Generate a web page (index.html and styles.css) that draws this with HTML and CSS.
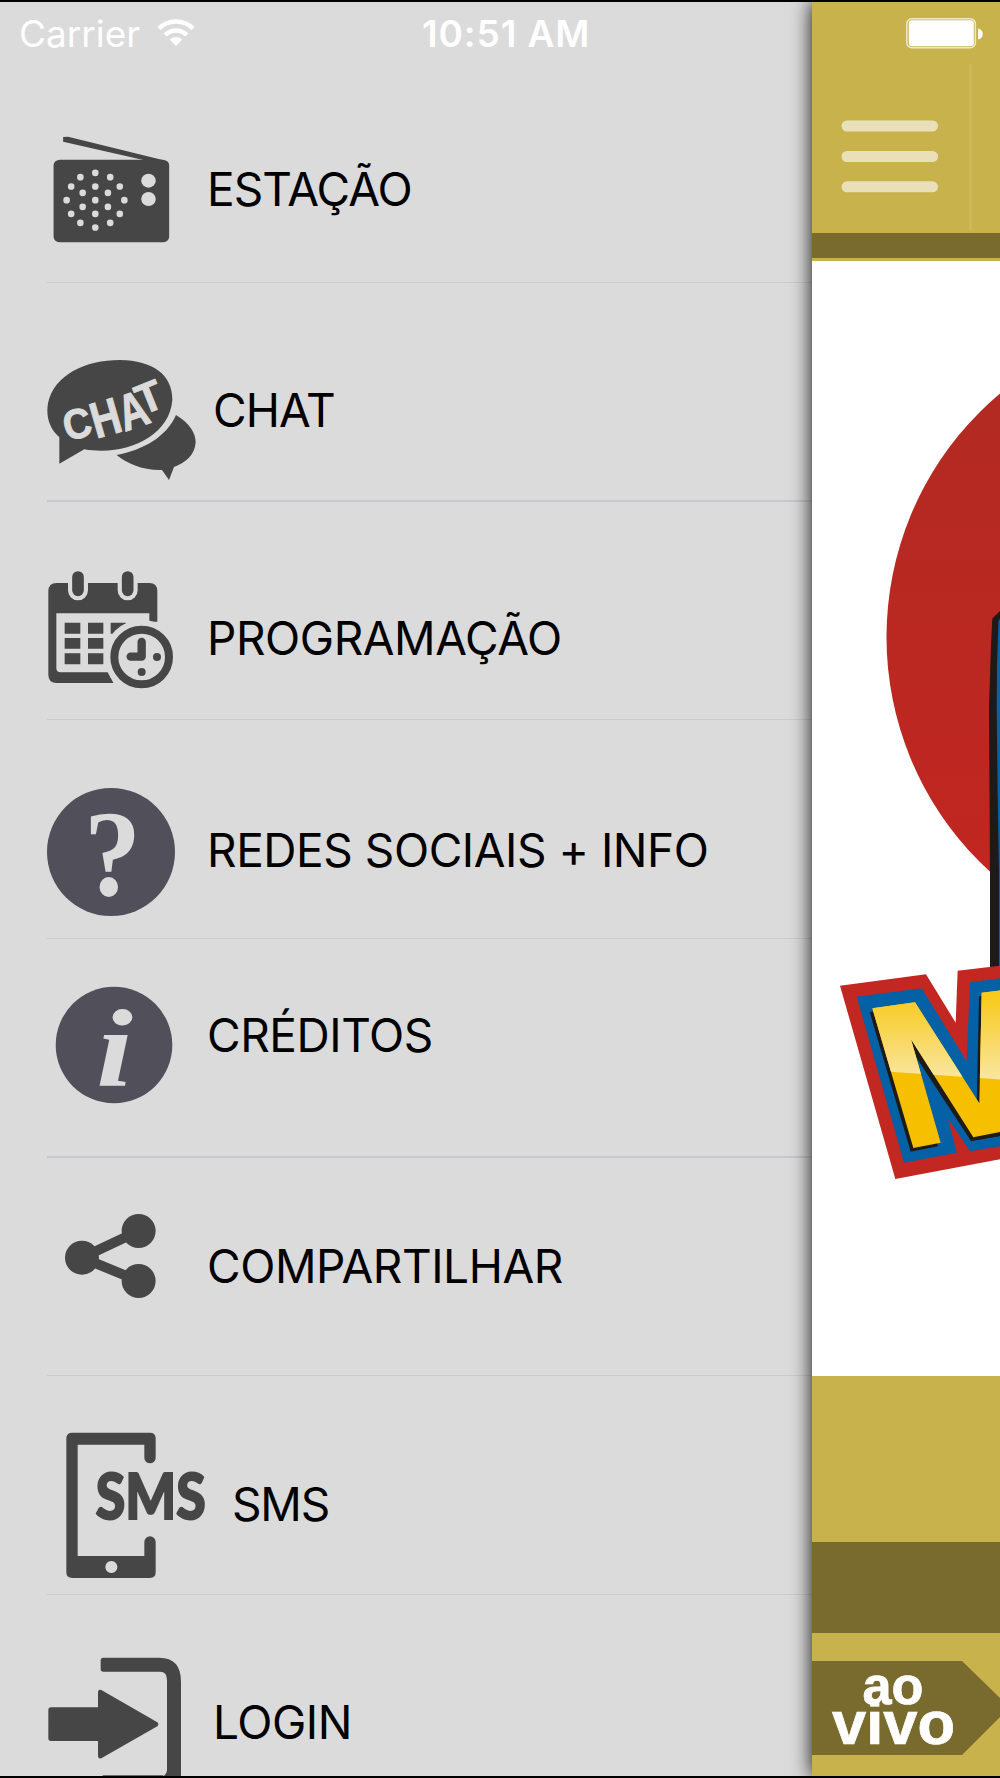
FILE: index.html
```html
<!DOCTYPE html>
<html lang="pt">
<head>
<meta charset="utf-8">
<title>Menu</title>
<link rel="stylesheet" href="styles.css">
</head>
<body>
<div class="screen">
  <aside class="menu">
    <header class="status">
      <span class="carrier">Carrier</span>
      <svg class="wifi" width="38" height="29" viewBox="0 0 38 29" fill="none" stroke="#fff" stroke-width="4.5">
        <path d="M1.8 10.5a24.5 24.5 0 0 1 34.4 0M8.1 17a15.5 15.5 0 0 1 21.8 0"/>
        <path d="M19 28l-6.2-6.5a9 9 0 0 1 12.4 0z" fill="#fff" stroke="none"/>
      </svg>
      <span class="time">10:51 AM</span>
    </header>
    <nav class="list">
      <a class="row estacao">
        <svg class="icon" width="159" height="218" viewBox="47 64 159 218">
          <g transform="scale(.3827 .33333)">
            <path d="M165 411L178 410 425 480 375 480 165 425Z" fill="#464646"/>
            <rect x="140" y="479" width="302" height="248" rx="17" fill="#464646"/>
            <g fill="#dbdbdb">
              <ellipse cx="388" cy="542" rx="19" ry="21"/><ellipse cx="388" cy="597" rx="19" ry="21"/>
            </g>
            <path d="M249 517v3M210 530v3M288 530v3M186 558v3M249 558v3M313 558v3M216 577v3M282 577v3M174 599v3M249 599v3M325 599v3M216 619v3M282 619v3M186 640v3M249 640v3M313 640v3M210 667v3M288 667v3M249 681v3" stroke="#dbdbdb" stroke-width="17" stroke-linecap="round"/>
          </g>
        </svg>
        <span class="label">ESTAÇÃO</span>
      </a>
      <a class="row chat">
        <svg class="icon" width="165" height="217" viewBox="47 283 165 217">
          <g transform="translate(30 340) scale(.33333)" fill="#464646">
            <path d="M438 225C480 250 497 280 497 307C495 345 465 370 432 381L417 420 396 390C340 392 290 370 260 345C340 330 410 290 438 225Z"/>
            <path d="M88 371V292C55 262 48 225 54 190C72 105 165 60 270 60C370 62 428 105 427 180C420 275 320 332 215 332C195 332 180 331 163 328Z"/>
            <text class="chat-word" font-size="126" transform="rotate(-14 142 252)" x="99" y="295" textLength="84" lengthAdjust="spacingAndGlyphs">C</text>
            <text class="chat-word" font-size="152" transform="rotate(-16 225 235)" x="183" y="287" textLength="88" lengthAdjust="spacingAndGlyphs">H</text>
            <text class="chat-word" font-size="152" transform="rotate(-19 305 210)" x="264" y="265" textLength="88" lengthAdjust="spacingAndGlyphs">A</text>
            <text class="chat-word" font-size="126" transform="rotate(-22 358 168)" x="318" y="214" textLength="76" lengthAdjust="spacingAndGlyphs">T</text>
          </g>
        </svg>
        <span class="label">CHAT</span>
      </a>
      <a class="row programacao">
        <svg class="icon" width="159" height="217" viewBox="47 502 159 217">
          <g transform="translate(30 550) scale(.33333)" fill="#464646">
            <path fill-rule="evenodd" d="M80 99H358Q382 99 382 124V215H358V190H79V355Q79 367 92 367H235L250 399H80Q55 399 55 374V124Q55 99 80 99Z"/>
            <path d="M144 81V121M293 81V121" stroke="#dbdbdb" stroke-width="60" stroke-linecap="round"/>
            <path d="M144 81V121M293 81V121" stroke="#464646" stroke-width="35" stroke-linecap="round"/>
            <path d="M104 218h47v33h-47zM174 218h46v33h-46zM242 218h46v33h-46zM104 264h47v32h-47zM174 264h46v32h-46zM104 310h47v33h-47zM174 310h46v33h-46z"/>
            <circle cx="335" cy="321" r="112" fill="#dbdbdb"/>
            <circle cx="335" cy="321" r="82" fill="none" stroke="#464646" stroke-width="24"/>
            <path d="M335 276V320H302" fill="none" stroke="#464646" stroke-width="25" stroke-linecap="round" stroke-linejoin="round"/>
            <circle cx="381" cy="321" r="12"/><circle cx="335" cy="366" r="12"/>
          </g>
        </svg>
        <span class="label">PROGRAMAÇÃO</span>
      </a>
      <a class="row redes">
        <svg class="icon" width="159" height="218" viewBox="47 720 159 218">
          <circle cx="111" cy="852" r="64" fill="#51505a"/>
          <text class="serif-mark" transform="translate(112.5 895) scale(.95 1.02)" text-anchor="middle">?</text>
        </svg>
        <span class="label">REDES SOCIAIS + INFO</span>
      </a>
      <a class="row creditos">
        <svg class="icon" width="159" height="217" viewBox="47 939 159 217">
          <circle cx="114" cy="1045" r="58.3" fill="#51505a"/>
          <text class="serif-mark slanted" transform="translate(114.5 1085.5) scale(1.1 .92)" text-anchor="middle">i</text>
        </svg>
        <span class="label">CRÉDITOS</span>
      </a>
      <a class="row compartilhar">
        <svg class="icon" width="159" height="217" viewBox="47 1158 159 217">
          <g transform="translate(30.3 1190) scale(.33333)" fill="#464646">
            <path d="M325 123L155 203 325 273" fill="none" stroke="#464646" stroke-width="30"/>
            <circle cx="325" cy="123" r="51"/><circle cx="155" cy="203" r="51"/><circle cx="325" cy="273" r="51"/>
          </g>
        </svg>
        <span class="label">COMPARTILHAR</span>
      </a>
      <a class="row sms">
        <svg class="icon" width="184" height="218" viewBox="47 1376 184 218">
          <g transform="translate(30 1400) scale(.33333)" fill="#464646">
            <path fill-rule="evenodd" d="M127 98H360Q377 98 377 115V173A17 17 0 0 1 343 173V134H143V468H343V426A17 17 0 0 1 377 426V517Q377 534 360 534H127Q109 534 109 517V115Q109 98 127 98ZM244 483a18 18 0 1 0 .1 0Z"/>
            <text class="sms-word" x="197" y="358" textLength="330" lengthAdjust="spacingAndGlyphs">SMS</text>
          </g>
        </svg>
        <span class="label">SMS</span>
      </a>
      <a class="row login">
        <svg class="icon" width="165" height="181" viewBox="47 1595 165 181">
          <g transform="translate(30 1630) scale(.33333)" fill="#464646">
            <path d="M220 83H388Q453 83 453 155V445H390Q411 436 411 420V150Q411 125 390 125H220Q212 125 212 117V91Q212 83 220 83Z"/>
            <path d="M218 436H400V445H218Z"/>
            <path d="M63 232H204V188Q204 176 214 180L382 277Q388 283 382 289L214 385Q204 387 204 377V333H63Q55 333 55 325V240Q55 232 63 232Z"/>
          </g>
        </svg>
        <span class="label">LOGIN</span>
      </a>
    </nav>
  </aside>
  <main class="player">
    <header class="topbar">
      <svg width="188" height="231" viewBox="812 2 188 231">
        <rect x="906.8" y="18.8" width="68.6" height="29" rx="5" fill="none" stroke="#f0e8cb" stroke-width="1.5"/>
        <rect x="908.8" y="20.3" width="65" height="26" rx="3" fill="#fff"/>
        <path d="M978 28.5Q982.7 29.5 982.7 34T978 39.5Z" fill="#fff"/>
        <path d="M970.5 64V231" stroke="#cdb85c" stroke-width="3"/>
        <path d="M847 126H932.5M847 156.5H932.5M847 186.8H932.5" stroke="#e9e0b9" stroke-width="11" stroke-linecap="round"/>
      </svg>
    </header>
    <div class="strip"></div>
    <section class="cover">
      <svg width="188" height="1115" viewBox="812 261 188 1115">
        <defs>
          <linearGradient id="disc" x1="0" y1="0" x2="0" y2="1"><stop offset="0" stop-color="#b02b24"/><stop offset="1" stop-color="#c4251f"/></linearGradient>
          <linearGradient id="gloss" gradientUnits="userSpaceOnUse" x1="0" y1="200" x2="0" y2="445"><stop offset="0" stop-color="#f8ca1c"/><stop offset="1" stop-color="#f9e6a0"/></linearGradient>
          <clipPath id="letter"><path d="M247 235L375 217 568 520 575 188 640 180V604L550 622 363 328 452 638 370 654Z"/></clipPath>
        </defs>
        <circle cx="1204.5" cy="637" r="318" fill="url(#disc)"/>
        <path d="M1002 608L1000 611 992.3 618.6 991 645 989 707 989.5 790 990 873V975H1002Z" fill="#1f1a17"/>
        <path d="M1000 619L998.5 621 997 665 996.7 707 997.6 790 999 873V975H1002V619Z" fill="#0761a3"/>
        <g transform="translate(790 930) scale(.33333)">
          <path d="M150 167L408 133 497 278 503 122 640 106V686L316 747Z" fill="#c22722"/>
          <path d="M200 200L395 175 530 393 540 157 640 143V647L540 664 475 568 501 668 342 698Z" fill="#0561a5"/>
          <path d="M239 246L367 228 560 531 567 199 640 191V616L543 633 366 352 363 328 400 400 444 649 362 665Z" fill="#1f1a17"/>
          <path d="M366 352L543 633 540 664 475 568 450 630 440 630Z" fill="#0561a5"/>
          <path d="M475 568L501 668 540 664Z" fill="#c22722"/>
          <path d="M363 328L376 378 543 633 640 616V590Z" fill="#1f1a17"/>
          <path d="M247 235L375 217 568 520 575 188 640 180V604L550 622 363 328 452 638 370 654Z" fill="#f6c000"/>
          <path clip-path="url(#letter)" d="M230 170H640V449L570 444 300 425 230 420Z" fill="url(#gloss)"/>
        </g>
      </svg>
    </section>
    <div class="band"></div>
    <footer class="live">
      <svg width="188" height="94" viewBox="812 1661 188 94">
        <path d="M812 1661H962L1002 1700V1715L962 1755H812Z" fill="#796b2d"/>
        <text class="live-word" x="862.5" y="1704" font-size="53" textLength="61" lengthAdjust="spacingAndGlyphs">ao</text>
        <text class="live-word" x="832" y="1743.5" font-size="61" textLength="123" lengthAdjust="spacingAndGlyphs">vivo</text>
      </svg>
    </footer>
  </main>
</div>
</body>
</html>
```
FILE: styles.css
```css
body { margin: 0; background: #000; }

.screen {
  box-sizing: border-box;
  display: flex;
  width: 1000px;
  height: 1778px;
  padding: 2px 0;
  overflow: hidden;
  background: #000;
  font-family: Inter, "Liberation Sans", sans-serif;
}

.menu { flex: 0 0 812px; height: 1774px; background: #dbdbdb; }

.status {
  display: flex;
  align-items: flex-start;
  height: 62px;
  color: #fff;
  font-size: 37px;
  line-height: 44px;
}
.carrier { width: 138px; padding-left: 19px; font-weight: 400; letter-spacing: 0; }
.wifi { margin-top: 16px; }
.time { margin-left: 227px; font-weight: 600; letter-spacing: .9px; white-space: nowrap; }

.carrier, .time { padding-top: 10px; }

.row {
  box-sizing: border-box;
  display: flex;
  align-items: flex-start;
  height: 219px;
  margin-left: 47px;
  border-bottom: 1px solid #cbcbcb;
  color: #000;
}
.icon { display: block; flex: none; }
.label { margin-left: 1px; font-size: 46px; line-height: 56px; letter-spacing: -.45px; white-space: nowrap; }

.chat, .creditos { border-bottom: 2px solid #c8c7cc; }
.programacao, .compartilhar { height: 218px; }
.login { height: 181px; border-bottom: 0; }

.estacao .label { margin-top: 97px; letter-spacing: -.9px; }
.chat .label { margin-top: 99px; letter-spacing: -.9px; }
.programacao .label { margin-top: 108px; }
.redes .label { margin-top: 102px; }
.creditos .label { margin-top: 68px; }
.compartilhar .label { margin-top: 80px; }
.sms .label { margin-top: 100px; letter-spacing: -1.2px; }
.login .label { margin-top: 99px; }

.chat-word { font-family: "Liberation Sans", sans-serif; font-weight: bold; fill: #dbdbdb; stroke: #dbdbdb; stroke-width: 3px; }
.sms-word { font: 900 188px Lato, sans-serif; stroke: #464646; stroke-width: 6px; }
.serif-mark { font: bold 120px "Liberation Serif", serif; fill: #dbdbdb; }
.slanted { font-style: italic; }

.player {
  position: relative;
  display: flex;
  flex-direction: column;
  flex: 0 0 188px;
  height: 1774px;
  background: #c8b24c;
  box-shadow: 0 0 19px rgba(0, 0, 0, .95);
}
.player svg { display: block; }
.topbar { height: 231px; }
.strip { height: 25px; margin-bottom: 3px; background: #796b2d; }
.cover { height: 1115px; background: #fff; }
.band { height: 91px; margin-top: 166px; background: #796b2d; }
.live { margin-top: 28px; }
.live-word {
  font-family: "Liberation Sans", Arial, sans-serif;
  font-weight: bold;
  fill: #fff;
  stroke: #fff;
  stroke-width: .7px;
}
```
